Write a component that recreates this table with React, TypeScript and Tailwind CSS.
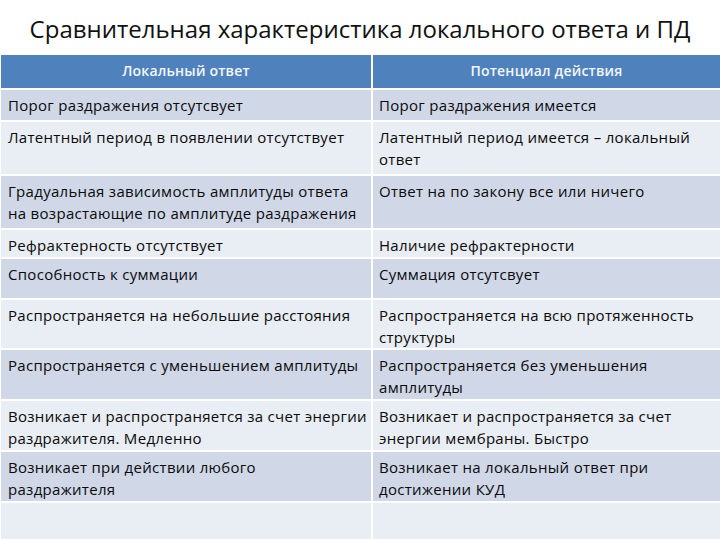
import React from "react";

type Row = { a: string[]; b: string[]; h: string; dark: boolean };

const rows: Row[] = [
  { a: ["Порог раздражения отсутсвует"], b: ["Порог раздражения имеется"], h: "h-[30px]", dark: true },
  { a: ["Латентный период в появлении отсутствует"], b: ["Латентный период имеется – локальный", "ответ"], h: "h-[52px]", dark: false },
  { a: ["Градуальная зависимость амплитуды ответа", "на возрастающие по амплитуде раздражения"], b: ["Ответ на по закону все или ничего"], h: "h-[52px]", dark: true },
  { a: ["Рефрактерность отсутствует"], b: ["Наличие рефрактерности"], h: "h-[27px]", dark: false },
  { a: ["Способность к суммации"], b: ["Суммация отсутсвует"], h: "h-[39px]", dark: true },
  { a: ["Распространяется на небольшие расстояния"], b: ["Распространяется на всю протяженность", "структуры"], h: "h-[48px]", dark: false },
  { a: ["Распространяется с уменьшением амплитуды"], b: ["Распространяется без уменьшения", "амплитуды"], h: "h-[49px]", dark: true },
  { a: ["Возникает и распространяется за счет энергии", "раздражителя. Медленно"], b: ["Возникает и распространяется за счет", "энергии мембраны. Быстро"], h: "h-[49px]", dark: false },
  { a: ["Возникает при действии любого", "раздражителя"], b: ["Возникает на локальный ответ при", "достижении КУД"], h: "h-[49px]", dark: true },
  { a: [], b: [], h: "h-[36px]", dark: false },
  { a: [], b: [], h: "h-[36px]", dark: true },
];

function Cell({ lines, dark, pad }: { lines: string[]; dark: boolean; pad: string }) {
  return (
    <div className={`${dark ? "bg-[#d0d8e8]" : "bg-[#e9edf4]"} ${pad} pt-[4px] text-[15px] leading-[22px] tracking-[0.3px] text-[#0a0a0a] whitespace-nowrap overflow-hidden`}>
      {lines.map((l, i) => (
        <div key={i}>{l}</div>
      ))}
    </div>
  );
}

export default function App() {
  return (
    <div className="w-[720px] h-[540px] overflow-hidden bg-white" style={{ fontFamily: '"Open Sans", "Noto Sans", sans-serif' }}>
      <div className="h-[55px] pt-[12px] text-center text-[24px] leading-[34px] text-[#111]">
        Сравнительная характеристика локального ответа и ПД
      </div>
      <div className="ml-[1px] flex flex-col gap-[2px]">
        <div className="grid grid-cols-[370px_1fr] gap-[2px] h-[33px]">
          <div className="bg-[#4f81bd] text-[#f4f6fa] font-semibold text-[14px] tracking-[0.2px] flex items-center justify-center pb-[3px]">Локальный ответ</div>
          <div className="bg-[#4f81bd] text-[#f4f6fa] font-semibold text-[14px] tracking-[0.2px] flex items-center justify-center pb-[3px]">Потенциал действия</div>
        </div>
        {rows.map((r, i) => (
          <div key={i} className={`grid grid-cols-[370px_1fr] gap-[2px] ${r.h}`}>
            <Cell lines={r.a} dark={r.dark} pad="px-[7px]" />
            <Cell lines={r.b} dark={r.dark} pad="px-[6px]" />
          </div>
        ))}
      </div>
    </div>
  );
}
